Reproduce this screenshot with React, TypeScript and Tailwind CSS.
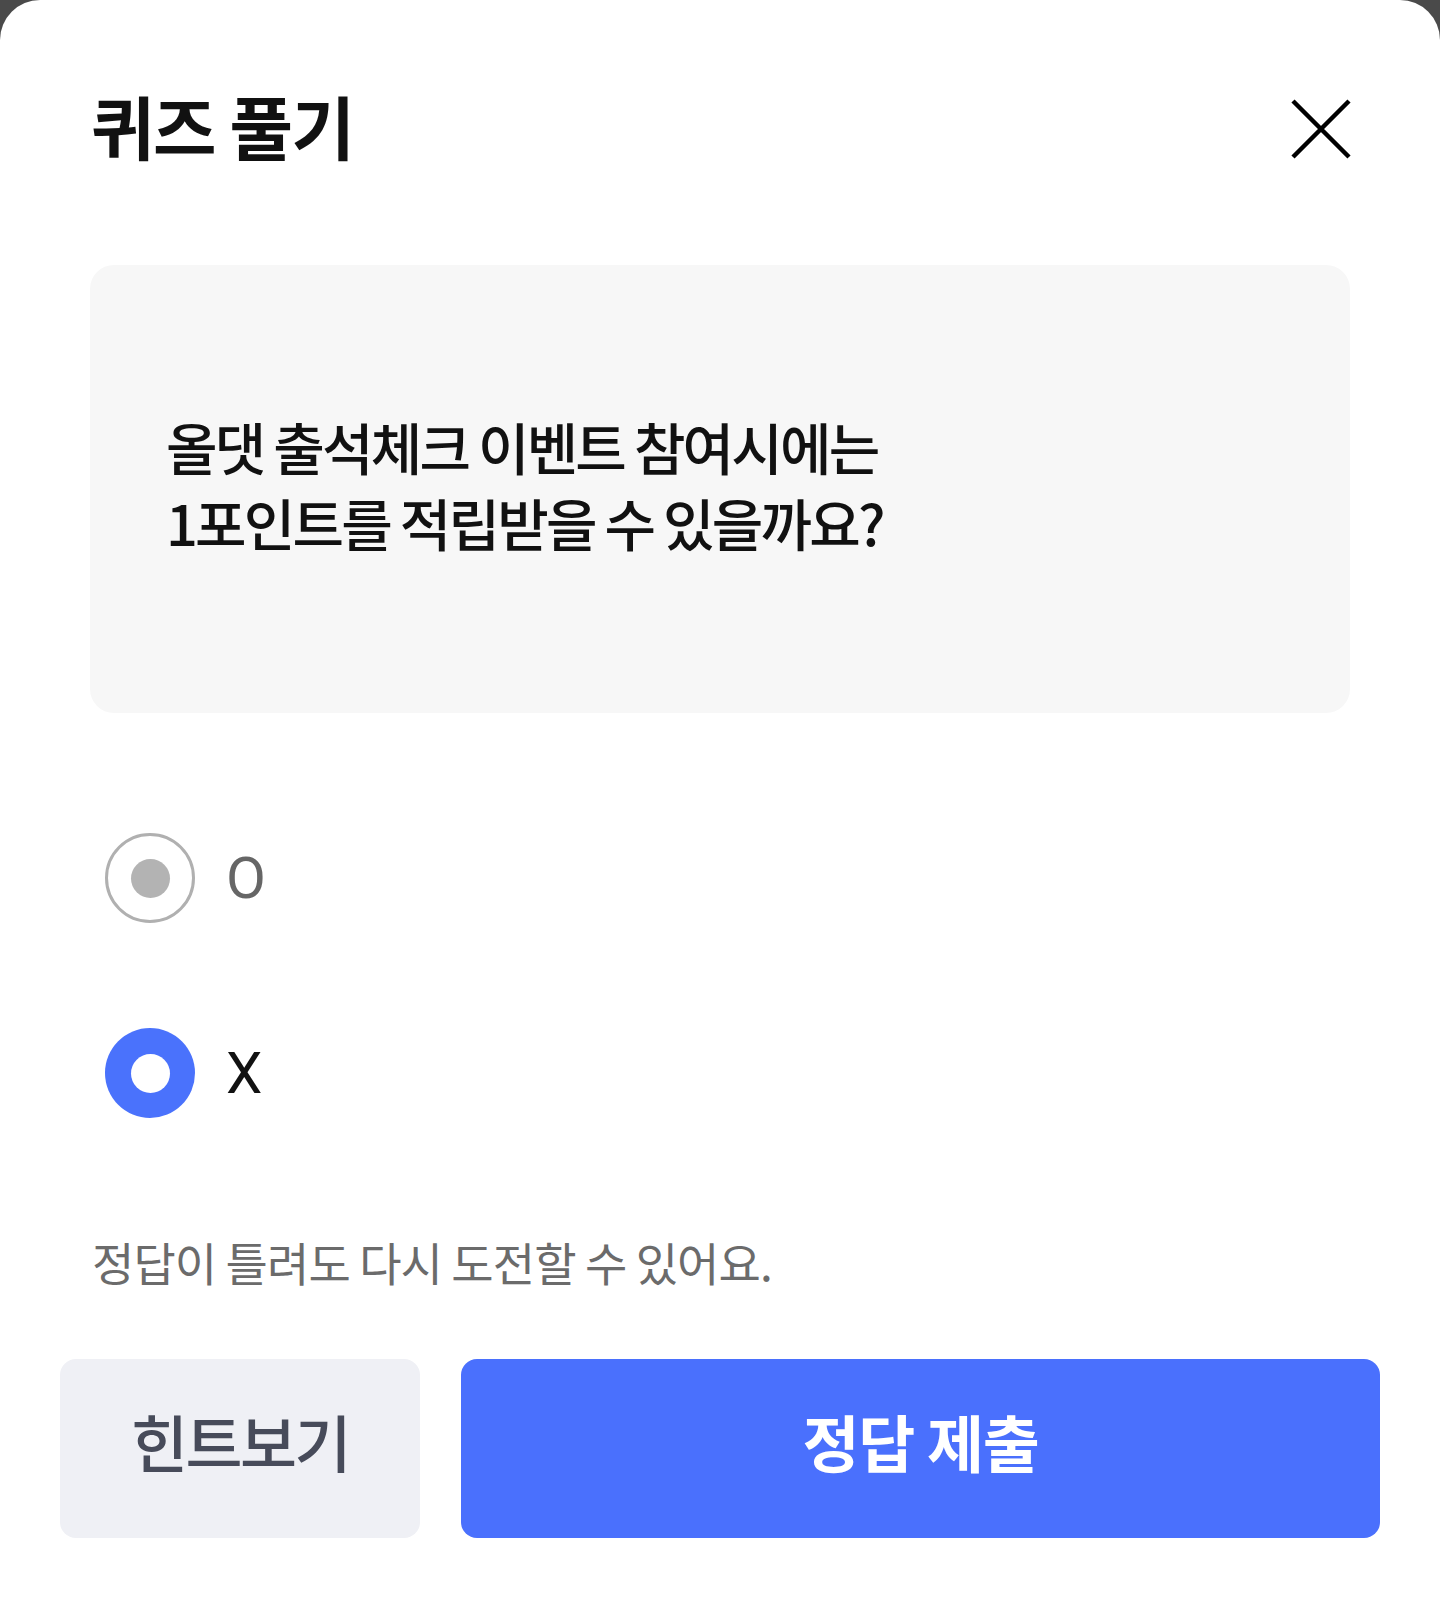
import React, { useState } from 'react';

const font = { fontFamily: '"Noto Sans CJK KR", "Noto Sans", Roboto, sans-serif' };

const App: React.FC = () => {
    const [answer, setAnswer] = useState<'O' | 'X'>('X');

    return (
        <div className="w-[1440px] h-[1597px] bg-[#4a4a4a]" style={font}>
            <div className="h-full bg-white rounded-t-[40px] flex flex-col">
                {/* Header */}
                <div className="h-[256px] flex items-center justify-between pl-[91px] pr-[88px] pb-[6px]">
                    <h2 className="text-[69px] font-bold leading-none text-[#111] tracking-[-0.02em]">퀴즈 풀기</h2>
                    <button type="button" aria-label="닫기" className="w-[62px] h-[62px] flex items-center justify-center mt-[8px]">
                        <svg width="62" height="62" viewBox="0 0 62 62">
                            <path d="M3 3 L59 59 M59 3 L3 59" stroke="#000" strokeWidth="4.5" />
                        </svg>
                    </button>
                </div>

                {/* Question */}
                <div className="mt-[9px] mx-[90px] h-[448px] rounded-[24px] bg-[#f7f7f7] flex items-center px-[76px] pb-[10px]">
                    <p className="text-[56px] font-medium leading-[76px] text-[#111] tracking-[-0.05em]">
                        올댓 출석체크 이벤트 참여시에는
                        <br />
                        1포인트를 적립받을 수 있을까요?
                    </p>
                </div>

                {/* Options */}
                <div className="mt-[120px] pl-[105px] flex flex-col gap-[105px]">
                    {(['O', 'X'] as const).map((opt) => {
                        const selected = answer === opt;
                        return (
                            <label key={opt} className="flex items-center gap-[31px] h-[90px] cursor-pointer" onClick={() => setAnswer(opt)}>
                                {selected ? (
                                    <span className="w-[90px] h-[90px] rounded-full bg-[#4a72fc] flex items-center justify-center">
                                        <span className="w-[39px] h-[39px] rounded-full bg-white" />
                                    </span>
                                ) : (
                                    <span className="w-[90px] h-[90px] rounded-full border-[3px] border-[#b0b0b0] flex items-center justify-center">
                                        <span className="w-[39px] h-[39px] rounded-full bg-[#b3b3b3]" />
                                    </span>
                                )}
                                <span
                                    className={`text-[58px] leading-none ${selected ? 'text-[#111]' : 'text-[#666]'}`}
                                    style={{ fontFamily: 'Roboto, "Noto Sans", sans-serif' }}
                                >
                                    {opt}
                                </span>
                            </label>
                        );
                    })}
                </div>

                {/* Helper */}
                <p className="mt-[113px] pl-[92px] text-[46px] leading-[60px] text-[#6b6b6b] tracking-[-0.02em]">
                    정답이 틀려도 다시 도전할 수 있어요.
                </p>

                {/* Buttons */}
                <div className="mt-[68px] px-[60px] flex gap-[41px]">
                    <button type="button" className="w-[360px] h-[179px] rounded-[16px] bg-[#eff0f5] text-[62px] font-medium text-[#474b5a] tracking-[-0.04em] pb-[14px]">
                        힌트보기
                    </button>
                    <button type="button" className="flex-1 h-[179px] rounded-[16px] bg-[#4a70fd] text-[62px] font-bold text-white tracking-[-0.02em] pb-[14px]">
                        정답 제출
                    </button>
                </div>
            </div>
        </div>
    );
};

export default App;
